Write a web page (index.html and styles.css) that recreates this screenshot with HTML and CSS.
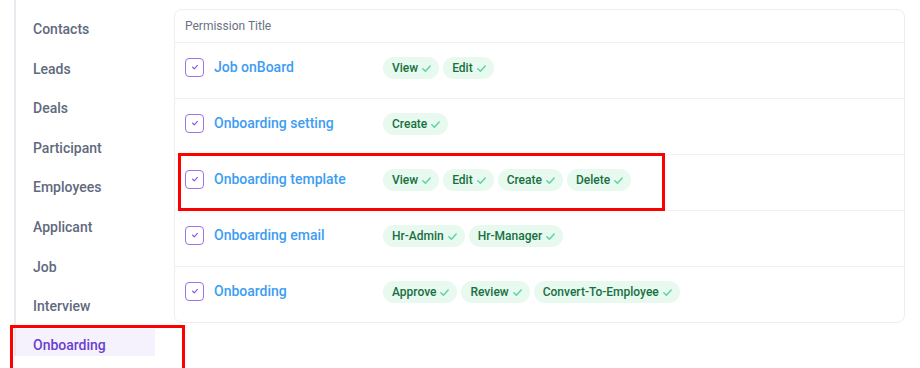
FILE: index.html
```html
<!DOCTYPE html>
<html lang="en">
<head>
    <meta charset="UTF-8">
    <meta name="viewport" content="width=device-width, initial-scale=1.0">
    <title>Permissions - Onboarding</title>
    <link rel="stylesheet" href="styles.css">
</head>
<body>

<div class="page">
    <ul class="sidebar">
        <li>Contacts</li>
        <li>Leads</li>
        <li>Deals</li>
        <li>Participant</li>
        <li>Employees</li>
        <li>Applicant</li>
        <li>Job</li>
        <li>Interview</li>
        <li class="active">Onboarding</li>
    </ul>

    <div class="card">
        <div class="card-head">Permission Title</div>

        <div class="perm-row">
            <span class="check-box"><svg viewBox="0 0 10 10"><path d="M2.6 5.2 L4.3 6.8 L7.4 3.4"/></svg></span>
            <span class="perm-title">Job onBoard</span>
            <div class="badges">
                <span class="badge">View <svg viewBox="0 0 12 12"><path d="M2 6.3 L4.8 9 L10 3.3"/></svg></span>
                <span class="badge">Edit <svg viewBox="0 0 12 12"><path d="M2 6.3 L4.8 9 L10 3.3"/></svg></span>
            </div>
        </div>

        <div class="perm-row">
            <span class="check-box"><svg viewBox="0 0 10 10"><path d="M2.6 5.2 L4.3 6.8 L7.4 3.4"/></svg></span>
            <span class="perm-title">Onboarding setting</span>
            <div class="badges">
                <span class="badge">Create <svg viewBox="0 0 12 12"><path d="M2 6.3 L4.8 9 L10 3.3"/></svg></span>
            </div>
        </div>

        <div class="perm-row">
            <span class="check-box"><svg viewBox="0 0 10 10"><path d="M2.6 5.2 L4.3 6.8 L7.4 3.4"/></svg></span>
            <span class="perm-title">Onboarding template</span>
            <div class="badges">
                <span class="badge">View <svg viewBox="0 0 12 12"><path d="M2 6.3 L4.8 9 L10 3.3"/></svg></span>
                <span class="badge">Edit <svg viewBox="0 0 12 12"><path d="M2 6.3 L4.8 9 L10 3.3"/></svg></span>
                <span class="badge">Create <svg viewBox="0 0 12 12"><path d="M2 6.3 L4.8 9 L10 3.3"/></svg></span>
                <span class="badge">Delete <svg viewBox="0 0 12 12"><path d="M2 6.3 L4.8 9 L10 3.3"/></svg></span>
            </div>
            <span class="mark mark-row"></span>
        </div>

        <div class="perm-row">
            <span class="check-box"><svg viewBox="0 0 10 10"><path d="M2.6 5.2 L4.3 6.8 L7.4 3.4"/></svg></span>
            <span class="perm-title">Onboarding email</span>
            <div class="badges">
                <span class="badge">Hr-Admin <svg viewBox="0 0 12 12"><path d="M2 6.3 L4.8 9 L10 3.3"/></svg></span>
                <span class="badge">Hr-Manager <svg viewBox="0 0 12 12"><path d="M2 6.3 L4.8 9 L10 3.3"/></svg></span>
            </div>
        </div>

        <div class="perm-row">
            <span class="check-box"><svg viewBox="0 0 10 10"><path d="M2.6 5.2 L4.3 6.8 L7.4 3.4"/></svg></span>
            <span class="perm-title">Onboarding</span>
            <div class="badges">
                <span class="badge">Approve <svg viewBox="0 0 12 12"><path d="M2 6.3 L4.8 9 L10 3.3"/></svg></span>
                <span class="badge">Review <svg viewBox="0 0 12 12"><path d="M2 6.3 L4.8 9 L10 3.3"/></svg></span>
                <span class="badge">Convert-To-Employee <svg viewBox="0 0 12 12"><path d="M2 6.3 L4.8 9 L10 3.3"/></svg></span>
            </div>
        </div>
    </div>

    <span class="mark mark-side"></span>
</div>

</body>
</html>
```

FILE: styles.css
```css
body {
    font-family: Roboto, "Liberation Sans", Arial, sans-serif;
    background-color: #fff;
    margin: 0;
    overflow: hidden;
}
.page {
    position: relative;
    display: flex;
    align-items: flex-start;
    padding: 9px 0 0 14px;
    height: 359px;
}
.sidebar {
    list-style: none;
    margin: -9px 0 0 0;
    padding: 12px 0 0 0;
    width: 143px;
    height: 356px;
    box-sizing: border-box;
    overflow: hidden;
    border-left: 2px solid #e8eaef;
    flex-shrink: 0;
}
.sidebar li {
    height: 34px;
    line-height: 34px;
    margin-bottom: 5.6px;
    padding-left: 17px;
    font-size: 14px;
    font-weight: 500;
    color: #5f6a7e;
}
.sidebar li.active {
    background-color: #f5f2fe;
    color: #6a3fd0;
    line-height: 32px;
    margin-right: 2px;
}
.card {
    margin-left: 17px;
    width: 729px;
    border: 1px solid #eceef2;
    border-radius: 8px;
}
.card-head {
    height: 32px;
    line-height: 33px;
    padding-left: 10px;
    font-size: 12px;
    color: #697283;
    border-bottom: 1px solid #eef0f4;
}
.perm-row {
    position: relative;
    display: flex;
    align-items: center;
    box-sizing: border-box;
    height: 56px;
    padding: 1px 10px 8px 10px;
    border-bottom: 1px solid #eef0f4;
}
.perm-row:last-child {
    border-bottom: none;
    height: 55px;
}
.check-box {
    width: 17px;
    height: 17px;
    border: 1.5px solid #9d72ea;
    border-radius: 4px;
    display: flex;
    align-items: center;
    justify-content: center;
    flex-shrink: 0;
}
.check-box svg {
    width: 10px;
    height: 10px;
    fill: none;
    stroke: #8a5fdc;
    stroke-width: 1.2;
    stroke-linecap: round;
    stroke-linejoin: round;
}
.perm-title {
    width: 169px;
    margin-left: 10px;
    font-size: 14px;
    font-weight: 500;
    color: #3d9df3;
    flex-shrink: 0;
}
.badges {
    display: flex;
    gap: 4px;
    margin-top: 2px;
}
.badge {
    display: inline-flex;
    align-items: center;
    height: 22px;
    padding: 0 7px 0 9px;
    border-radius: 11px;
    background-color: #e8f9f0;
    color: #17703f;
    font-size: 12px;
    font-weight: 500;
}
.badge svg {
    width: 11px;
    height: 11px;
    margin-left: 3px;
    fill: none;
    stroke: #5dd3a4;
    stroke-width: 1.6;
    stroke-linecap: round;
    stroke-linejoin: round;
}
.mark {
    position: absolute;
    border: 3px solid #ff0000;
    box-sizing: border-box;
}
.mark-row {
    left: 3px;
    top: -2px;
    width: 487px;
    height: 58px;
}
.mark-side {
    left: 10px;
    top: 325px;
    width: 175px;
    height: 43px;
    border-bottom: none;
}
```
